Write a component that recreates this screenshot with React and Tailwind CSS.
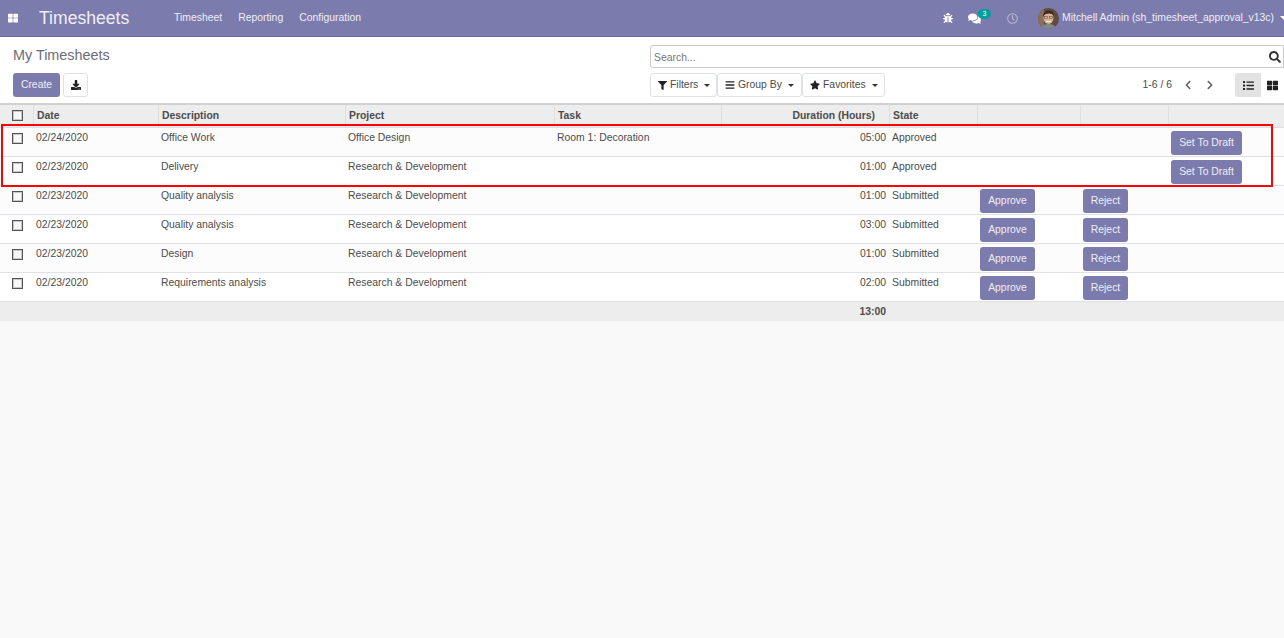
import React from "react";
import { FaBug, FaComments, FaRegClock, FaDownload, FaFilter, FaBars, FaStar, FaSearch, FaList, FaThLarge, FaChevronLeft, FaChevronRight } from "react-icons/fa";

const rows = [
  { date: "02/24/2020", desc: "Office Work", project: "Office Design", task: "Room 1: Decoration", hours: "05:00", state: "Approved" },
  { date: "02/23/2020", desc: "Delivery", project: "Research & Development", task: "", hours: "01:00", state: "Approved" },
  { date: "02/23/2020", desc: "Quality analysis", project: "Research & Development", task: "", hours: "01:00", state: "Submitted" },
  { date: "02/23/2020", desc: "Quality analysis", project: "Research & Development", task: "", hours: "03:00", state: "Submitted" },
  { date: "02/23/2020", desc: "Design", project: "Research & Development", task: "", hours: "01:00", state: "Submitted" },
  { date: "02/23/2020", desc: "Requirements analysis", project: "Research & Development", task: "", hours: "02:00", state: "Submitted" },
];

function Check() {
  return <span className="block w-[11px] h-[11px] ml-[12px] border border-[#555] bg-[#f8f8f8] shadow-[inset_0_0_0_1px_#c8c8c8]"></span>;
}

function ActionBtn({ children, className }) {
  return (
    <button className={"block h-6 rounded-[3px] bg-[#7c7bad] text-[#eeeef6] text-center " + className}>
      {children}
    </button>
  );
}

function FilterBtn({ icon, label, width }) {
  return (
    <button className={"h-6 flex items-center pl-[7px] bg-white border border-[#dee2e6] rounded-[3px] text-[#4c4c4c] whitespace-nowrap " + width}>
      {icon}
      <span className="ml-[3px]">{label}</span>
      <span className="ml-[6px] w-0 h-0 border-x-[3px] border-x-transparent border-t-[3px] border-t-[#333]"></span>
    </button>
  );
}

function Avatar() {
  return (
    <svg width="21" height="21" viewBox="0 0 21 21" className="block">
      <defs>
        <clipPath id="av"><circle cx="10.5" cy="10.5" r="10.5" /></clipPath>
      </defs>
      <g clipPath="url(#av)">
        <rect width="21" height="21" fill="#5f4c3e" />
        <rect x="0" y="0" width="6" height="21" fill="#8a6f58" />
        <path d="M3 21c1-4 4-5 7.500-5s6.500 1 7.500 5z" fill="#7f8a88" />
        <ellipse cx="10.500" cy="10" rx="5" ry="6" fill="#d9b095" />
        <path d="M5 9c0-5 3-6.500 6-6.500s5 2 5 6c-1-2-2-3-5-3s-5 1-6 3.500z" fill="#3a2b22" />
        <rect x="6.500" y="8.500" width="3.200" height="2" fill="none" stroke="#5a4538" strokeWidth="0.5" />
        <rect x="11.300" y="8.500" width="3.200" height="2" fill="none" stroke="#5a4538" strokeWidth="0.5" />
        <path d="M8 13c1 1 4 1 5 0" stroke="#fff" strokeWidth="0.9" fill="none" />
      </g>
    </svg>
  );
}

export default function App() {
  return (
    <div className="relative min-h-[638px] overflow-hidden bg-[#f9f9f9] text-[10.4px] text-[#4c4c4c] font-['Liberation_Sans',Arial,sans-serif]">
      <header className="h-[37px] bg-[#7c7bad] border-b border-[#6d6c9e] flex items-center text-[#eeeef6]">
        <FaThLarge className="ml-[8px] text-[10px] text-white" />
        <span className="ml-[21px] text-[17.6px] w-[135px]">Timesheets</span>
        <nav className="flex gap-4">
          <span>Timesheet</span>
          <span>Reporting</span>
          <span>Configuration</span>
        </nav>
        <div className="ml-auto flex items-center">
          <FaBug className="text-[10px] text-white" />
          <span className="relative ml-[15px] w-[24px]">
            <FaComments className="text-[13px] text-white" />
            <span className="absolute left-[10px] -top-[3px] h-[10px] w-[13px] rounded-full bg-[#00a09d] text-white text-[7px] leading-[10px] text-center">3</span>
          </span>
          <FaRegClock className="ml-[15px] text-[11px] text-[#b5b4d2]" />
          <span className="ml-[20px]"><Avatar /></span>
          <span className="ml-[3px]">Mitchell Admin (sh_timesheet_approval_v13c)</span>
          <span className="ml-[6px] mr-[-4px] w-0 h-0 border-x-[4px] border-x-transparent border-t-[4px] border-t-white"></span>
        </div>
      </header>

      <section className="h-[68px] bg-white flex px-[13px] border-b-2 border-[#d0d0d0]">
        <div className="w-[637px]">
          <h1 className="mt-[9px] text-[14.4px] leading-[18px] text-[#6c6c7a]">My Timesheets</h1>
          <div className="mt-[9px] flex gap-[3px]">
            <button className="h-6 w-[47px] rounded-[3px] bg-[#7c7bad] text-[#eeeef6]">Create</button>
            <button className="h-6 w-[25px] flex items-center justify-center rounded-[3px] bg-white border border-[#dee2e6]">
              <FaDownload className="text-[10px] text-[#222]" />
            </button>
          </div>
        </div>
        <div className="flex-1 -mr-[13px]">
          <div className="mt-[8px] h-[23px] border border-[#ccc] rounded-l-[3px] flex items-center pl-[3px]">
            <span className="text-[#777] pt-[2px]">Search...</span>
            <FaSearch className="ml-auto mr-[2px] text-[12px] text-[#333]" />
          </div>
          <div className="mt-[5px] flex items-center">
            <FilterBtn icon={<FaFilter className="text-[9px] text-[#222]" />} label="Filters" width="w-[67px]" />
            <FilterBtn icon={<FaBars className="text-[10px] text-[#222]" />} label="Group By" width="w-[85px]" />
            <FilterBtn icon={<FaStar className="text-[10px] text-[#222]" />} label="Favorites" width="w-[83px]" />
            <span className="ml-auto">1-6 / 6</span>
            <FaChevronLeft className="ml-[11px] text-[10px] text-[#666]" />
            <FaChevronRight className="ml-[12px] text-[10px] text-[#666]" />
            <div className="ml-[20px] flex h-6 w-[49px]">
              <span className="w-[26px] flex items-center justify-center bg-[#e2e2e2] rounded-l-[3px]">
                <FaList className="text-[11px] text-[#222]" />
              </span>
              <span className="flex-1 flex items-center justify-center bg-white">
                <FaThLarge className="text-[11px] text-[#222]" />
              </span>
            </div>
          </div>
        </div>
      </section>

      <table className="w-full table-fixed border-separate border-spacing-0">
        <colgroup>
          <col className="w-[33px]" />
          <col className="w-[125px]" />
          <col className="w-[187px]" />
          <col className="w-[209px]" />
          <col className="w-[167px]" />
          <col className="w-[168px]" />
          <col className="w-[88px]" />
          <col className="w-[103px]" />
          <col className="w-[88px]" />
          <col />
        </colgroup>
        <thead>
          <tr className="h-[23px] bg-[#ededed] font-bold text-[#4c4c4c]">
            <th className="p-0 pt-[5px] align-top border-b border-[#dee2e6]"><Check /></th>
            <th className="p-0 pl-[3px] pt-[3px] align-top text-left border-l border-b border-[#dfdfdf]">Date</th>
            <th className="p-0 pl-[3px] pt-[3px] align-top text-left border-l border-b border-[#dfdfdf]">Description</th>
            <th className="p-0 pl-[3px] pt-[3px] align-top text-left border-l border-b border-[#dfdfdf]">Project</th>
            <th className="p-0 pl-[3px] pt-[3px] align-top text-left border-l border-b border-[#dfdfdf]">Task</th>
            <th className="p-0 pr-[14px] pt-[3px] align-top text-right border-l border-b border-[#dfdfdf]">Duration (Hours)</th>
            <th className="p-0 pl-[3px] pt-[3px] align-top text-left border-l border-b border-[#dfdfdf]">State</th>
            <th className="p-0 border-l border-b border-[#dfdfdf]"></th>
            <th className="p-0 border-l border-b border-[#dfdfdf]"></th>
            <th className="p-0 border-l border-b border-[#dfdfdf]"></th>
          </tr>
        </thead>
        <tbody>
          {rows.map((r, i) => (
            <tr key={i} className={"h-[29px] [&>td]:border-b [&>td]:border-[#dee2e6] " + (i % 2 === 0 ? "bg-[#fcfcfc]" : "bg-white")}>
              <td className="p-0 pt-[5px] align-top"><Check /></td>
              <td className="p-0 pl-[3px] pt-[2px] align-top">{r.date}</td>
              <td className="p-0 pl-[3px] pt-[2px] align-top">{r.desc}</td>
              <td className="p-0 pl-[3px] pt-[2px] align-top">{r.project}</td>
              <td className="p-0 pl-[3px] pt-[2px] align-top">{r.task}</td>
              <td className="p-0 pr-[3px] pt-[2px] align-top text-right">{r.hours}</td>
              <td className="p-0 pl-[3px] pt-[2px] align-top">{r.state}</td>
              <td className="p-0 pl-[3px] pt-[3px] align-top">
                {r.state === "Submitted" && <ActionBtn className="w-[55px]">Approve</ActionBtn>}
              </td>
              <td className="p-0 pl-[3px] pt-[3px] align-top">
                {r.state === "Submitted" && <ActionBtn className="w-[45px]">Reject</ActionBtn>}
              </td>
              <td className="p-0 pl-[3px] pt-[3px] align-top">
                {r.state === "Approved" && <ActionBtn className="w-[71px]">Set To Draft</ActionBtn>}
              </td>
            </tr>
          ))}
        </tbody>
        <tfoot>
          <tr className="h-[19px] bg-[#ededed] font-bold">
            <td colSpan={5} className="p-0"></td>
            <td className="p-0 pr-[3px] text-right">13:00</td>
            <td colSpan={4} className="p-0"></td>
          </tr>
        </tfoot>
      </table>

      <div className="absolute left-[1px] top-[124px] w-[1272px] h-[63px] border-2 border-[#f00]"></div>
    </div>
  );
}
